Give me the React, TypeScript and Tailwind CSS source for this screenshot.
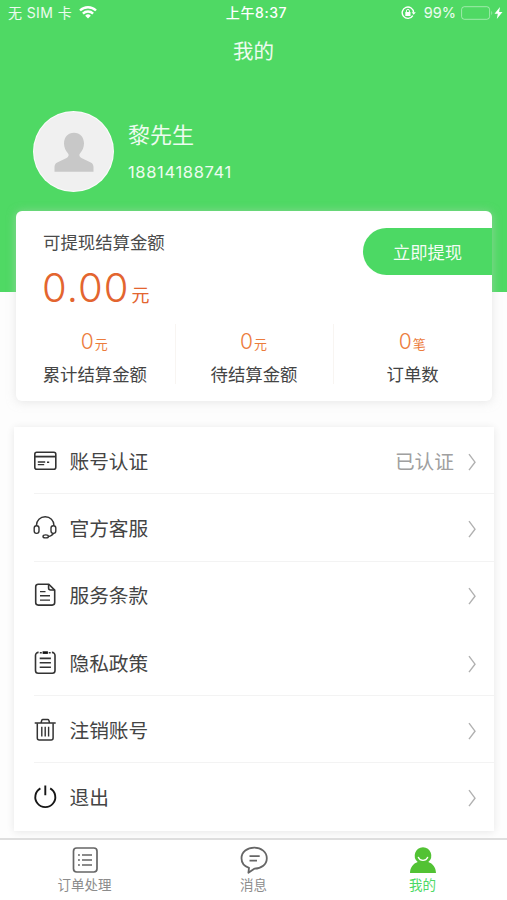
import { useState, type ReactNode } from 'react';

interface Stat {
  value: string;
  unit: string;
  label: string;
}

interface MenuItem {
  label: string;
  icon: ReactNode;
  extra?: string;
  divider?: boolean;
}

const stats: Stat[] = [
  { value: '0', unit: '元', label: '累计结算金额' },
  { value: '0', unit: '元', label: '待结算金额' },
  { value: '0', unit: '笔', label: '订单数' },
];

const iconProps = {
  className: 'w-6 h-6 shrink-0',
  viewBox: '0 0 24 24',
  fill: 'none',
  stroke: '#333',
  strokeWidth: 1.6,
};

const menuItems: MenuItem[] = [
  {
    label: '账号认证',
    extra: '已认证',
    divider: true,
    icon: (
      <svg {...iconProps}>
        <rect x="1.8" y="3.2" width="21" height="17" rx="2" />
        <path d="M2 7.6h20.6" strokeWidth={1.8} />
        <path d="M4.8 13h7.4M4.8 15.6h6.4M14 13.2h2.2" strokeWidth={1.4} />
      </svg>
    ),
  },
  {
    label: '官方客服',
    divider: true,
    icon: (
      <svg {...iconProps} strokeWidth={1.4}>
        <path d="M3.4 9.6C3.4 4.2 7.3.8 12.2.8S21 4.2 21 9.6M20.6 17.2c-1.1 2-2.8 3.1-5.2 3.4" />
        <rect x="1.2" y="9.8" width="4.8" height="7.6" rx="2.3" />
        <rect x="18" y="9.8" width="4.8" height="7.6" rx="2.3" />
        <ellipse cx="12.7" cy="20.4" rx="2.7" ry="1.5" />
      </svg>
    ),
  },
  {
    label: '服务条款',
    icon: (
      <svg {...iconProps}>
        <path d="M15.8 1.2H5.2a2.5 2.5 0 0 0-2.5 2.5v15.9a2.5 2.5 0 0 0 2.5 2.5h14a2.5 2.5 0 0 0 2.5-2.5V7.2z" />
        <path d="M15.6 1.4V5a2 2 0 0 0 2 2h4" />
        <path d="M7 8.6h5.5M7 12.8h10M7 17.1h10" strokeWidth={1.4} />
      </svg>
    ),
  },
  {
    label: '隐私政策',
    divider: true,
    icon: (
      <svg {...iconProps}>
        <path d="M5.6 1.4a3 3 0 0 0-3.1 3v15.2a2.7 2.7 0 0 0 2.7 2.7h14.1a2.7 2.7 0 0 0 2.7-2.7V4.4a3 3 0 0 0-3.1-3M6.8 1.7h2M15.7 1.7h2" />
        <path d="M9.6 1.6h5.3" stroke="#111" strokeWidth={2.6} />
        <path d="M6.7 7.4h11.2M6.7 11.7h11.2M6.7 16.2h11.2" />
      </svg>
    ),
  },
  {
    label: '注销账号',
    divider: true,
    icon: (
      <svg {...iconProps} strokeWidth={1.5}>
        <path d="M1.7 5.1h21M8 4.9l.8-2.7c.2-.6.5-.8 1.1-.8h4.8c.6 0 .9.2 1.1.8l.8 2.7" />
        <path d="M4.3 5.2v14.9a2 2 0 0 0 2 2h11.8a2 2 0 0 0 2-2V5.2" />
        <path d="M8.8 8.8v9.6M12.2 8.8v9.6M15.6 8.8v9.6" strokeWidth={1.4} />
      </svg>
    ),
  },
  {
    label: '退出',
    icon: (
      <svg {...iconProps} stroke="#161616" strokeWidth={1.9}>
        <path d="M7.4 3.4a10 10 0 1 0 9.8 0M12.3 .6v9.6" />
      </svg>
    ),
  },
];

function StatusBar() {
  return (
    <div className="h-[26px] px-2 flex items-center justify-between text-[14px] leading-none text-white/90">
      <div className="flex-1 flex items-center gap-[7px]">
        <span className="tracking-[0.4px]">无 SIM 卡</span>
        <svg className="w-[18px] h-[13px] -mt-0.5" viewBox="0 0 18 13" fill="none" stroke="white" strokeWidth="2.4">
          <path d="M1 4.5a11.5 11.5 0 0 1 16 0M3.9 7.6a7.4 7.4 0 0 1 10.2 0" />
          <path d="M9 12.4L6.2 9.7a4 4 0 0 1 5.6 0z" fill="white" stroke="none" />
        </svg>
      </div>
      <span className="font-medium text-[14px] tracking-[0.6px] text-white">上午8:37</span>
      <div className="flex-1 -mr-1.5 flex items-center justify-end">
        <svg className="w-[15px] h-[14px] mr-2" viewBox="0 0 15 14" fill="none" stroke="white" strokeWidth="1.4">
          <path d="M11.8 9.6a5.7 5.7 0 1 1 .8-3" />
          <path d="M10.6 6.2h4.2l-2.1 2.6z" fill="white" stroke="none" />
          <rect x="4.3" y="6" width="5.2" height="4" fill="white" stroke="none" />
          <path d="M5.4 6V4.9a1.5 1.5 0 0 1 3 0V6" strokeWidth="1" />
        </svg>
        <span className="text-[14.5px]">99%</span>
        <svg className="w-8 h-[14px] ml-[5px]" viewBox="0 0 32 14" fill="none" stroke="white" strokeOpacity="0.45">
          <rect x=".6" y=".7" width="28" height="12.6" rx="2.8" />
          <path d="M30.3 5v4c1.3-.5 1.3-3.5 0-4z" fill="white" fillOpacity="0.45" stroke="none" />
        </svg>
        <svg className="w-[9px] h-3 ml-px mr-0.5" viewBox="0 0 9 12" fill="white">
          <path d="M6 0L.5 6.7h3.3L2.8 12 8.5 5H5.1z" />
        </svg>
      </div>
    </div>
  );
}

function Profile() {
  return (
    <div className="mt-[33px] ml-[33px] flex items-center">
      <div className="w-[81px] h-[81px] rounded-full bg-[#f0f0f0] border border-white/80 flex items-center justify-center">
        <svg className="w-10 h-10" viewBox="0 0 40 40" fill="#c8c8c8">
          <path d="M20 .8c6 0 10 4.6 10 10.6 0 4-1.7 7.2-3.9 9.8-1.4 1.7-.8 3.7 1.3 4.7l9.4 4.6c1.9 1 2.7 2.6 2.7 4.5v4.7H.5V35c0-1.9.8-3.5 2.7-4.5l9.4-4.6c2.1-1 2.7-3 1.3-4.7-2.2-2.6-3.9-5.800-3.900-9.800C10 5.400 14 .8 20 .8z" />
        </svg>
      </div>
      <div className="ml-3.5 text-white/90">
        <div className="text-[22px] leading-[30px]">黎先生</div>
        <div className="mt-2.5 text-[16.5px] leading-6 tracking-[0.65px]">18814188741</div>
      </div>
    </div>
  );
}

function BalanceCard() {
  return (
    <div className="mt-[19px] ml-4 mr-[15px] h-[190px] shrink-0 rounded-md bg-white shadow-[0_1px_10px_rgba(210,210,210,0.5)] overflow-hidden">
      <div className="flex justify-between">
        <div className="pl-[27px] pt-5">
          <div className="text-[17.4px] leading-6 text-[#4a4a4a]">可提现结算金额</div>
          <div className="mt-[9px] -ml-px text-[40px] leading-12 font-[350] tracking-[1px] text-[#e3652f]">
            0.00<span className="ml-0.5 text-[18px] font-normal tracking-normal">元</span>
          </div>
        </div>
        <button className="mt-[17px] h-[47px] w-[129px] rounded-l-full bg-[#4cd964] pt-0.5 text-[17.3px] text-white/95">
          立即提现
        </button>
      </div>
      <div className="mt-1 grid grid-cols-3">
        {stats.map((stat, i) => (
          <div
            key={stat.label}
            className={`h-[60px] flex flex-col items-center ${i > 0 ? 'border-l border-[#f8f5f2]' : ''}`}
          >
            <div className="mt-1.5 h-6 pr-0.5 leading-6 text-[21px] font-light text-[#ec7c3c]">
              {stat.value}
              <span className="ml-px text-[13px] font-normal">{stat.unit}</span>
            </div>
            <div className="mt-[9px] pr-px text-[17.4px] leading-6 text-[#444]">{stat.label}</div>
          </div>
        ))}
      </div>
    </div>
  );
}

function MenuList() {
  return (
    <div className="mt-[26px] ml-3.5 mr-[13px] shrink-0 bg-white shadow-[0_1px_8px_rgba(0,0,0,0.09)]">
      {menuItems.map((item) => (
        <div
          key={item.label}
          className={`ml-5 h-[67.3px] pt-[3px] flex items-center border-b ${
            item.divider ? 'border-[#f3f3f3]' : 'border-transparent'
          }`}
        >
          <div className="-ml-[1.5px] pb-0.5 flex">{item.icon}</div>
          <span className="ml-[13px] pt-0.5 flex-1 text-[19.7px] text-[#444]">{item.label}</span>
          {item.extra && <span className="mr-3 pt-0.5 text-[19.7px] text-[#a0a0a0]">{item.extra}</span>}
          <svg className="w-3 h-[18px] mr-4" viewBox="0 0 12 18" fill="none" stroke="#b0b0b0" strokeWidth="1.4">
            <path d="M3 1.2l6 8-6 8" />
          </svg>
        </div>
      ))}
    </div>
  );
}

const tabs = [
  {
    label: '订单处理',
    icon: (
      <svg className="w-7 h-7" viewBox="0 0 28 28" fill="none" stroke="#666" strokeWidth="1.7">
        <rect x="2.5" y="2" width="23.5" height="24" rx="3.2" />
        <path d="M11 9h10M11 14h10M11 19h10M7 9h1.9M7 14h1.9M7 19h1.9" />
      </svg>
    ),
  },
  {
    label: '消息',
    icon: (
      <svg className="w-7 h-7" viewBox="0 0 28 28" fill="none" stroke="#666" strokeWidth="1.8" strokeLinejoin="round">
        <path d="M14.3 1.6c7 0 12.5 4.4 12.5 10.6s-5.3 10.3-12.5 10.5L8.4 26.8l.6-5C4.3 20.2 1.5 16.7 1.5 12.2 1.5 6 7.3 1.6 14.3 1.6z" />
        <path d="M9.5 10.2h10.2M9.5 14.6h7.5" />
      </svg>
    ),
  },
  {
    label: '我的',
    icon: (
      <svg className="w-7 h-7" viewBox="0 0 28 28" fill="#52c234">
        <path d="M14 1.3a8.4 8.4 0 0 1 5.3 14.8c4.5 1.6 7.5 5.3 7.7 10.9H1c.2-5.6 3.2-9.3 7.7-10.9A8.4 8.4 0 0 1 14 1.3z" />
        <path d="M9.3 11.3c1.8 4.2 7.6 4.2 9.4 0" fill="none" stroke="white" strokeWidth="1.3" strokeLinecap="round" />
      </svg>
    ),
  },
];

export default function App() {
  const [activeTab, setActiveTab] = useState(2);

  return (
    <div className="w-[507px] h-[900px] flex flex-col overflow-hidden bg-[#fdfdfd] bg-[linear-gradient(#4fd964,#4fd964)] bg-[length:100%_292px] bg-no-repeat font-['Inter','Noto_Sans_CJK_SC',sans-serif]">
      <StatusBar />
      <h1 className="h-[52px] text-center text-[20.5px] leading-[52px] text-white/90">我的</h1>
      <Profile />
      <BalanceCard />
      <MenuList />

      {/* Tab bar */}
      <div className="mt-auto h-[62px] shrink-0 grid grid-cols-3 border-t-2 border-[#dedede] bg-white">
        {tabs.map((tab, i) => (
          <button
            key={tab.label}
            onClick={() => setActiveTab(i)}
            className={`pt-1.5 flex flex-col items-center text-[13.5px] leading-[21px] ${
              i === activeTab ? 'text-[#4cd964]' : 'text-[#8c8c8c]'
            }`}
          >
            {tab.icon}
            <span className="mt-px">{tab.label}</span>
          </button>
        ))}
      </div>
    </div>
  );
}
